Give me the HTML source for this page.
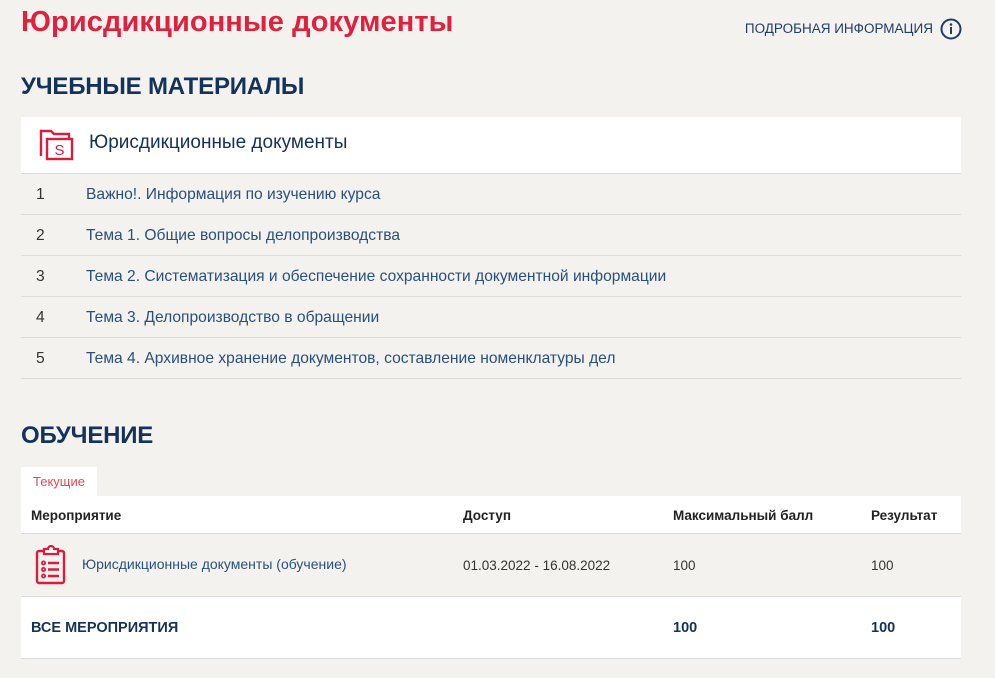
<!DOCTYPE html><html><head><meta charset="utf-8"><style>
body{margin:0;background:#f3f2ef;font-family:"Liberation Sans",sans-serif;width:995px;height:678px;overflow:hidden;position:relative;color:#333}
.a{position:absolute}
h1{position:absolute;left:21px;top:6px;margin:0;font-size:29px;font-weight:bold;color:#e0203c;letter-spacing:0.1px}
.h2{position:absolute;left:21px;margin:0;font-size:24px;font-weight:bold;color:#14325a;letter-spacing:-0.2px}
.info{right:62px;top:21px;font-size:13.5px;color:#1f3d66}
.row{position:absolute;left:21px;width:940px;height:40px;border-bottom:1px solid #dcdcdc;font-size:15.6px;line-height:42px}
.row .n{position:absolute;left:15px;color:#333}
.row .t{position:absolute;left:65px;color:#2a4f7a}
.th{position:absolute;font-size:13.5px;font-weight:bold;color:#222}
</style></head><body>
<h1>Юрисдикционные документы</h1>
<div class="a info">ПОДРОБНАЯ ИНФОРМАЦИЯ</div>
<svg class="a" style="left:940px;top:18px" width="22" height="22" viewBox="0 0 22 22"><circle cx="11" cy="11" r="9.5" fill="none" stroke="#1f3d66" stroke-width="2"/><circle cx="11" cy="6.5" r="1.3" fill="#1f3d66"/><rect x="10" y="9" width="2" height="7" fill="#1f3d66"/></svg>
<div class="h2" style="top:73px">УЧЕБНЫЕ МАТЕРИАЛЫ</div>
<div class="a" style="left:21px;top:117px;width:940px;height:56px;background:#fff;border-bottom:1px solid #dcdcdc"></div>
<svg class="a" style="left:39px;top:128px" width="36" height="34" viewBox="0 0 36 34"><path d="M2 28V3h10l3 3h15v4" fill="none" stroke="#d81e3c" stroke-width="2.4"/><rect x="8" y="11" width="25" height="20" fill="none" stroke="#d81e3c" stroke-width="2.4"/><text x="20.5" y="27" text-anchor="middle" font-size="15" fill="#d81e3c" font-family="Liberation Sans">S</text></svg>
<div class="a" style="left:89px;top:132px;font-size:19px;color:#14325a">Юрисдикционные документы</div>
<div class="row" style="top:174px"><span class="n">1</span><span class="t">Важно!. Информация по изучению курса</span></div>
<div class="row" style="top:215px"><span class="n">2</span><span class="t">Тема 1. Общие вопросы делопроизводства</span></div>
<div class="row" style="top:256px"><span class="n">3</span><span class="t">Тема 2. Систематизация и обеспечение сохранности документной информации</span></div>
<div class="row" style="top:297px"><span class="n">4</span><span class="t">Тема 3. Делопроизводство в обращении</span></div>
<div class="row" style="top:338px"><span class="n">5</span><span class="t">Тема 4. Архивное хранение документов, составление номенклатуры дел</span></div>
<div class="h2" style="top:422px">ОБУЧЕНИЕ</div>
<div class="a" style="left:21px;top:467px;width:76px;height:29px;background:#fff;font-size:13px;color:#e04a55;line-height:30px;text-align:center">Текущие</div>
<div class="a" style="left:21px;top:496px;width:940px;height:37px;background:#fff;border-bottom:1px solid #dcdcdc"></div>
<div class="th" style="left:31px;top:508px">Мероприятие</div>
<div class="th" style="left:463px;top:508px">Доступ</div>
<div class="th" style="left:673px;top:508px">Максимальный балл</div>
<div class="th" style="left:871px;top:508px">Результат</div>
<svg class="a" style="left:34px;top:545px" width="34" height="40" viewBox="0 0 34 40"><rect x="3" y="6" width="27" height="32" rx="2" fill="none" stroke="#d81e3c" stroke-width="2.4"/><path d="M10 6V4h4a3 3 0 016 0h4v5H10z" fill="#fff" stroke="#d81e3c" stroke-width="2.2"/><g fill="none" stroke="#d81e3c" stroke-width="1.8"><circle cx="9.5" cy="18" r="1.6"/><circle cx="9.5" cy="24.5" r="1.6"/><circle cx="9.5" cy="31" r="1.6"/></g><g stroke="#d81e3c" stroke-width="2.4"><path d="M14 18h11M14 24.5h11M14 31h11"/></g></svg>
<div class="a" style="left:82px;top:556px;font-size:14px;color:#2a4f7a">Юрисдикционные документы (обучение)</div>
<div class="a" style="left:463px;top:558px;font-size:13.5px">01.03.2022 - 16.08.2022</div>
<div class="a" style="left:673px;top:558px;font-size:13.5px">100</div>
<div class="a" style="left:871px;top:558px;font-size:13.5px">100</div>
<div class="a" style="left:21px;top:596px;width:940px;height:61px;background:#fff;border-top:1px solid #dcdcdc;border-bottom:1px solid #dcdcdc"></div>
<div class="a" style="left:31px;top:620px;font-size:14.5px;font-weight:bold;color:#14325a">ВСЕ МЕРОПРИЯТИЯ</div>
<div class="a" style="left:673px;top:620px;font-size:14.5px;font-weight:bold;color:#14325a">100</div>
<div class="a" style="left:871px;top:620px;font-size:14.5px;font-weight:bold;color:#14325a">100</div>
</body></html>
